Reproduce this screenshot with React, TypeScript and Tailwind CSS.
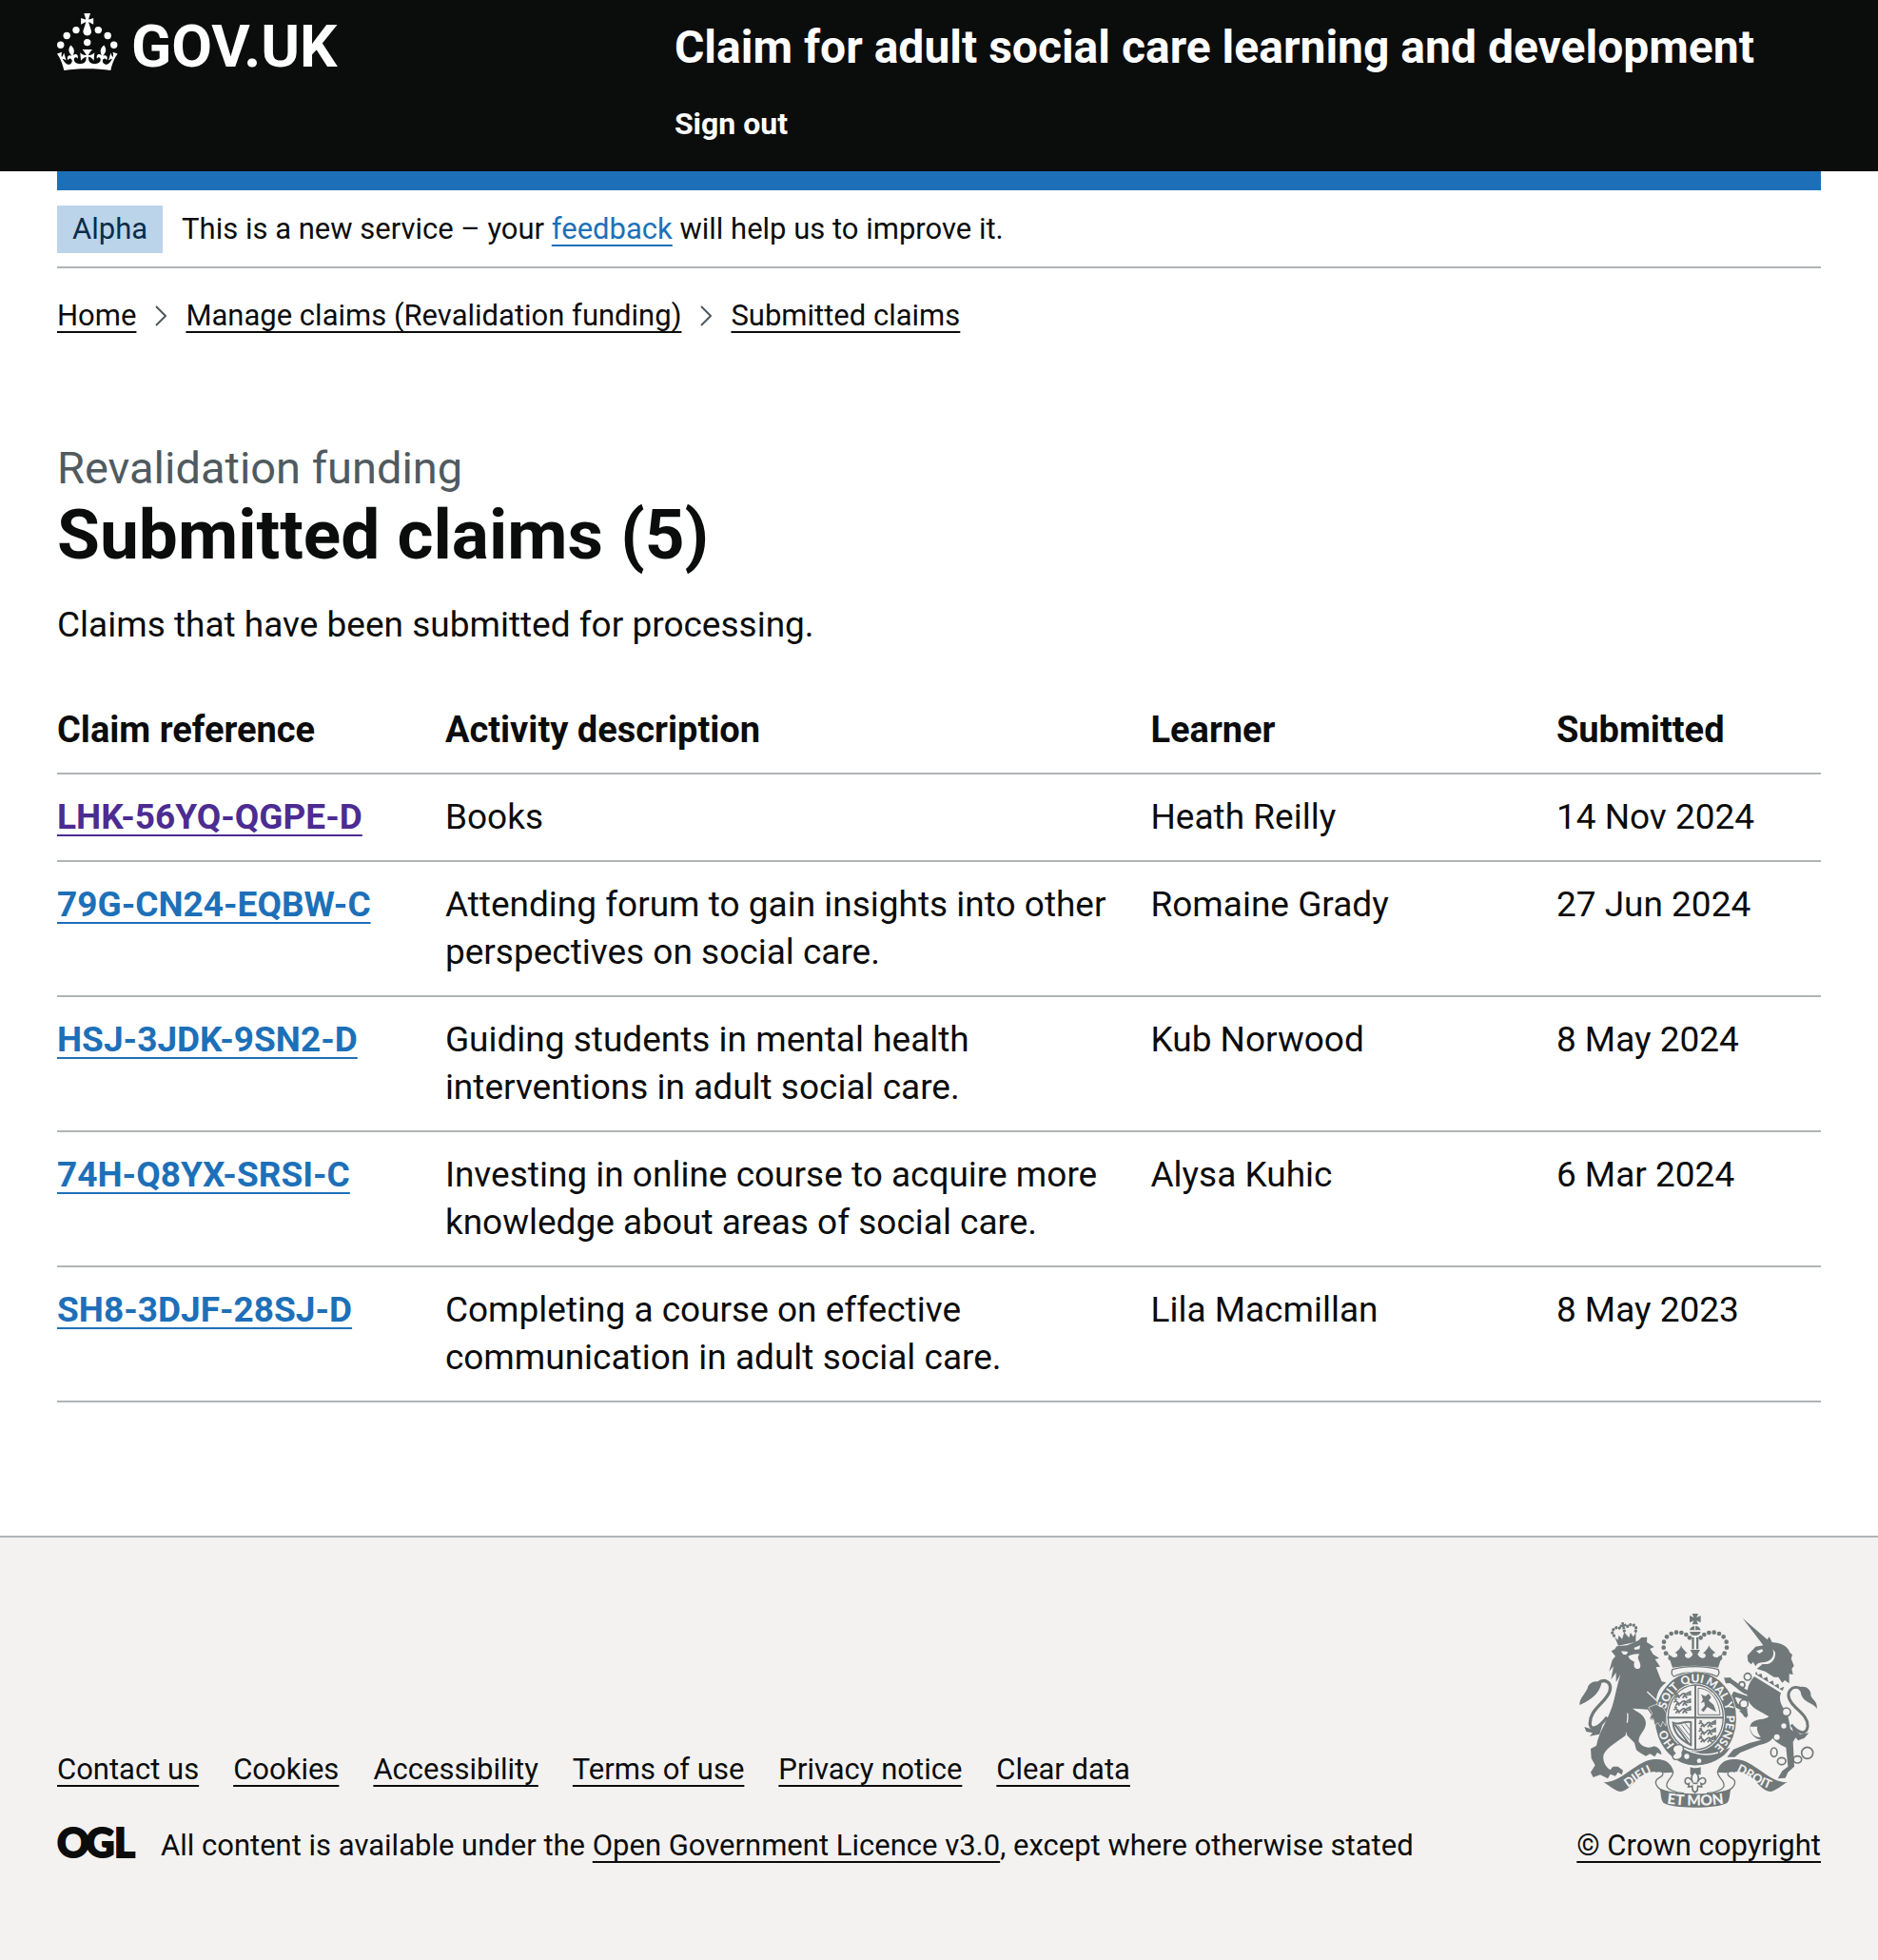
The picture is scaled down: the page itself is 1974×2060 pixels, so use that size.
import type { ReactNode } from "react";

const claims = [
  { ref: "LHK-56YQ-QGPE-D", activity: "Books", learner: "Heath Reilly", submitted: "14 Nov 2024", visited: true },
  {
    ref: "79G-CN24-EQBW-C",
    activity: "Attending forum to gain insights into other perspectives on social care.",
    learner: "Romaine Grady",
    submitted: "27 Jun 2024",
  },
  {
    ref: "HSJ-3JDK-9SN2-D",
    activity: "Guiding students in mental health interventions in adult social care.",
    learner: "Kub Norwood",
    submitted: "8 May 2024",
  },
  {
    ref: "74H-Q8YX-SRSI-C",
    activity: "Investing in online course to acquire more knowledge about areas of social care.",
    learner: "Alysa Kuhic",
    submitted: "6 Mar 2024",
  },
  {
    ref: "SH8-3DJF-28SJ-D",
    activity: "Completing a course on effective communication in adult social care.",
    learner: "Lila Macmillan",
    submitted: "8 May 2023",
  },
];

const footerLinks = ["Contact us", "Cookies", "Accessibility", "Terms of use", "Privacy notice", "Clear data"];

function Link({ children, className = "text-[#0b0c0c]" }: { children: ReactNode; className?: string }) {
  return (
    <a
      href="#"
      className={`underline decoration-2 underline-offset-[6px] [text-decoration-skip-ink:none] ${className}`}
    >
      {children}
    </a>
  );
}

function Crown() {
  return (
    <svg width="64" height="60" viewBox="0 0 64 60" fill="currentColor" aria-hidden="true">
      <circle cx="20" cy="17.6" r="3.7" />
      <circle cx="10.2" cy="23.5" r="3.7" />
      <circle cx="3.7" cy="33.2" r="3.7" />
      <circle cx="31.7" cy="30.6" r="3.7" />
      <circle cx="43.3" cy="17.6" r="3.7" />
      <circle cx="53.2" cy="23.5" r="3.7" />
      <circle cx="59.7" cy="33.2" r="3.7" />
      <path d="M33.1,9.8c.2-.1.3-.3.5-.5l4.6,2.4v-6.8l-4.6,1.5c-.1-.2-.3-.3-.5-.5l1.9-5.9h-6.7l1.9,5.9c-.2.1-.3.3-.5.5l-4.6-1.5v6.8l4.6-2.4c.1.2.3.3.5.5l-2.6,8c-.9,2.8,1.2,5.7,4.1,5.7h0c3,0,5.1-2.9,4.1-5.7l-2.6-8ZM37,37.9s-3.4,3.8-4.1,6.1c2.2,0,4.2-.5,6.4-2.8l-.7,8.5c-2-2.8-4.4-4.1-5.7-3.8.1,3.1.5,6.7,5.8,7.2,3.7.3,6.7-1.5,7-3.8.4-2.6-2-4.3-3.7-1.6-1.4-4.5,2.4-6.1,4.9-3.2-1.9-4.5-1.8-7.7,2.4-10.9,3,4,2.6,7.3-1.2,11.1,2.4-1.3,6.2,0,4,4.6-1.2-2.8-3.7-2.2-4.2.2-.3,1.7.7,3.7,3,4.2,1.9.3,4.7-.9,7-5.9-1.3,0-2.4.7-3.9,1.7l2.4-8c.6,2.3,1.4,3.7,2.2,4.5.6-1.6.5-2.8,0-5.3l5,1.8c-2.6,3.6-5.2,8.7-7.3,17.5-7.4-1.1-15.7-1.7-24.5-1.7h0c-8.8,0-17.1.6-24.5,1.7-2.1-8.9-4.7-13.9-7.3-17.5l5-1.8c-.5,2.5-.6,3.7,0,5.3.8-.8,1.6-2.3,2.2-4.5l2.4,8c-1.5-1-2.6-1.7-3.9-1.7,2.3,5,5.2,6.2,7,5.9,2.3-.4,3.3-2.4,3-4.2-.5-2.4-3-3.1-4.2-.2-2.2-4.6,1.6-6,4-4.6-3.7-3.7-4.2-7.1-1.2-11.1,4.2,3.2,4.3,6.4,2.4,10.9,2.5-2.8,6.3-1.3,4.9,3.2-1.8-2.7-4.1-1-3.7,1.6.3,2.3,3.3,4.1,7,3.8,5.4-.5,5.7-4.2,5.8-7.2-1.3-.2-3.7,1-5.7,3.8l-.7-8.5c2.2,2.3,4.2,2.7,6.4,2.8-.7-2.3-4.1-6.1-4.1-6.1h10.6,0Z" />
    </svg>
  );
}

function OglLogo() {
  return (
    <svg
      width="82"
      height="40"
      viewBox="0 0 82 40"
      aria-label="Open Government Licence"
      role="img"
      className="shrink-0 overflow-visible"
      fill="#0b0c0c"
      stroke="#0b0c0c"
      strokeWidth="2"
    >
      <text x="0 30 60" y="32" fontFamily="Lato, sans-serif" fontWeight="900" fontSize="42">
        OGL
      </text>
    </svg>
  );
}

const crownDots = [
  [341, 188],
  [327, 173],
  [320, 155],
  [321, 137],
  [330, 121],
  [344, 111],
  [360, 107],
  [376, 108],
  [391, 114],
  [402, 124],
];

const quarterLions = [
  [352, 300],
  [352, 324],
  [352, 348],
  [431, 392],
  [431, 416],
  [431, 440],
];

const garterWords = [
  ["HO", "15.5%"],
  ["SOIT", "35.5%"],
  ["QUI", "48.5%"],
  ["MAL", "60.5%"],
  ["Y", "69.5%"],
  ["PENSE", "82%"],
];

function RoyalArms() {
  const ink = "#707879";
  const paper = "#f3f2f1";
  return (
    <svg width="255" height="204" viewBox="45 48 765 612" role="img" aria-label="Royal coat of arms" fill={ink}>
      <defs>
        <path id="garter" d="M421 491 A97 113 0 0 1 421 265 A97 113 0 0 1 421 491" />
        <path id="dieu" d="M192 604 C225 590 245 560 300 543" />
        <path id="droit" d="M532 541 C580 552 610 590 670 606" />
        <path id="mon" d="M325 646 Q420 660 515 646" />
      </defs>

      {/* lion's crown */}
      <g transform="rotate(-12 198 112)">
        <path d="M164 114 L172 126 L178 112 L186 126 L197 106 L208 126 L216 112 L222 126 L233 114 L226 144 H170Z" />
        <path d="M193 75 H203 L201 82 L208 80 V90 L201 88 L203 96 H193 L195 88 L188 90 V80 L195 82Z" />
        <g>
          {[[163, 110], [160, 100], [165, 91], [175, 87], [185, 90], [211, 90], [221, 87], [231, 91], [236, 100], [233, 110], [198, 102]].map(
            ([x, y]) => (
              <circle key={`${x}-${y}`} cx={x} cy={y} r="5" />
            ),
          )}
        </g>
      </g>
      {/* lion */}
      <path d="M155 166 L166 160 L172 151 L205 148 L240 133 L250 123 L268 122 L267 138 L290 153 L277 159 L287 176 L306 188 L293 192 L309 215 L296 217 L305 240 L314 262 L328 265 C308 280 299 298 297 318 L318 336 L330 360 L328 402 L317 388 L312 405 L302 392 L291 399 L290 384 L276 380 L281 366 L270 350 L240 348 L222 347 C235 358 262 365 264 392 C264 418 238 430 242 452 C254 470 274 474 290 466 C302 468 314 480 313 493 L300 486 L292 499 L277 490 L264 497 L246 487 L234 478 L228 455 L205 432 L199 412 L205 388 L200 432 C180 448 140 470 131 492 C126 512 138 532 152 540 L160 530 L176 530 L192 542 L188 556 L176 548 L168 560 L152 554 L144 568 L120 556 L98 564 L90 548 L104 526 L92 504 L90 474 L108 464 C116 420 142 388 158 340 C168 306 174 270 184 240 L170 264 L170 234 L154 256 L162 214 L148 230 L158 194 L168 182Z" />
      <path d="M186 166 L208 168 L202 178 L192 176Z M226 156 L246 148 L244 160 L230 162Z M208 182 C218 178 234 172 244 176 C236 184 240 190 244 200 C250 214 246 222 238 222 C228 222 224 212 228 200 L214 192Z" fill={paper} />
      <path d="M268 294 L322 344 M206 362 C208 372 207 380 205 392" stroke={paper} strokeWidth="4" fill="none" />
      <path d="M55 336 C54 312 78 298 82 276 C92 260 112 258 124 268 C118 296 96 318 55 336Z" />
      <path d="M112 268 C134 250 158 264 150 292 C140 328 84 350 88 398 C92 416 112 412 142 374" fill="none" stroke={ink} strokeWidth="10" />
      <path d="M70 405 L92 412 L128 396 L118 428 L86 434 L96 424 L76 420Z" />

      {/* unicorn */}
      <path d="M569 62 L654 136 L636 150Z" />
      <path d="M584 180 L610 152 L634 148 L653 121 L662 138 C692 140 712 152 718 170 L726 178 L722 190 L731 212 L724 222 L728 240 L716 238 L716 268 L702 258 L694 266 L682 248 L668 248 L640 230 L614 222 L638 202 C624 200 614 204 610 214 L602 200 L596 208 L586 198Z" />
      <path d="M612 166 L630 160 L634 166 L622 174Z M632 202 C660 200 672 182 664 160 L672 170 C674 194 656 212 632 206Z" fill={paper} />
      <path d="M612 224 L618 238 L630 234 L634 250 L648 244 L652 262 L666 256 L670 272 L684 266 L686 282 L704 274 L696 294 L606 240Z" stroke={paper} strokeWidth="4" />
      <path d="M606 246 L690 298 C682 318 690 336 702 352 C716 372 716 394 720 412 L742 430 L728 452 L732 530 L712 548 L704 566 L680 568 L694 544 L712 530 L706 470 C690 462 672 452 664 440 C656 452 640 458 622 462 L562 486 L544 500 L520 500 L540 476 L590 456 L628 446 C600 444 582 410 598 392 C612 378 640 384 652 372 C626 356 596 346 586 320 C578 290 590 264 606 246Z" />
      <path d="M592 404 C594 424 606 438 626 438 C618 424 612 412 616 404Z" fill={paper} />
      <path d="M604 238 L692 294" stroke={paper} strokeWidth="5" />
      <path d="M588 298 C560 290 552 268 522 256 M592 318 L544 302 L538 314 L548 336 L574 350 L580 372" fill="none" stroke={ink} strokeWidth="14" />
      <path d="M510 250 L532 250 L540 266 L516 268Z M558 354 L584 346 L582 378Z" />
      <path d="M757 286 C724 268 700 298 724 330 C742 354 776 370 774 404 C770 430 748 428 722 398" fill="none" stroke={ink} strokeWidth="9" />
      <path d="M742 282 C768 270 786 288 784 306 C790 322 806 324 803 348 C794 328 756 330 752 294Z M722 400 L750 428 L778 424 L764 440 L744 448 L734 436Z" />
      <g fill="none" stroke={ink} strokeWidth="5">
        <circle cx="585" cy="247" r="11" />
        <circle cx="567" cy="272" r="9" />
        <circle cx="573" cy="332" r="13" fill={paper} />
        <circle cx="707" cy="358" r="13" fill={paper} />
        <ellipse cx="668" cy="485" rx="10" ry="14" />
        <ellipse cx="692" cy="513" rx="13" ry="11" />
        <ellipse cx="742" cy="508" rx="13" ry="11" />
        <circle cx="773" cy="487" r="18" />
      </g>
      <circle cx="699" cy="402" r="8" fill={paper} />
      <circle cx="677" cy="437" r="9" fill={paper} />

      {/* imperial crown */}
      <path d="M410 48 H429 L424 60 L437 54 V76 L424 70 L429 82 H410 L415 70 L402 76 V54 L415 60Z" />
      <path d="M402 100 A18 17 0 0 1 437 100Z M402 105 H437 A18 16 0 0 1 402 105Z" />
      <path d="M409 122 H416 V160 H409Z M423 122 H430 V160 H423Z" />
      <path d="M419 82 V100" stroke={paper} strokeWidth="3" />
      {crownDots.map(([x, y]) => (
        <g key={`${x}-${y}`}>
          <circle cx={x} cy={y} r="7" />
          <circle cx={839 - x} cy={y} r="7" />
        </g>
      ))}
      <path d="M332 170 C342 184 350 190 362 184 C366 178 362 172 356 172 C366 164 374 158 375 148 C378 158 388 166 396 174 C388 172 384 178 390 186 C400 192 408 184 412 176 L404 162 H435 L427 176 C432 184 440 192 450 186 C456 178 450 172 443 174 C452 166 460 158 463 148 C466 158 474 164 484 172 C476 172 472 178 478 184 C490 190 498 184 508 170 L492 218 C440 210 398 210 348 218Z" />
      <path d="M348 224 C390 212 450 212 492 224 C496 232 496 240 488 246 C450 228 392 228 352 246 C344 240 344 232 348 224Z" fill={paper} stroke={ink} strokeWidth="4" />

      {/* garter */}
      <ellipse cx="421" cy="379" rx="130" ry="149" fill={paper} />
      <ellipse cx="421" cy="379" rx="128" ry="147" />
      <ellipse cx="421" cy="375" rx="92" ry="107" fill={paper} />
      <ellipse cx="421" cy="375" rx="87" ry="102" fill={paper} stroke={ink} strokeWidth="4" />
      <path d="M332 376 H510 M420 272 V478" stroke={ink} strokeWidth="6" />
      {quarterLions.map(([x, y]) => (
        <path
          key={`${x}-${y}`}
          d={`M${x} ${y + 4} q6 -8 12 0 t12 0 t14 -2 t12 -2 M${x + 6} ${y + 14} l6 -8 l6 8 M${x + 28} ${y + 14} l6 -9 l8 9 M${x + 40} ${y} l12 -6 v12 M${x + 2} ${y - 6} l8 2`}
          fill="none"
          stroke={ink}
          strokeWidth="5"
        />
      ))}
      <path d="M429 283 C466 284 494 316 498 367 H429Z" fill="none" stroke={ink} strokeWidth="3" />
      <path d="M438 302 L452 308 L462 300 L470 312 L462 322 L478 336 L486 358 L472 350 L458 342 L446 358 L438 352 L450 338 L448 326 L438 330 L444 318Z" />
      <path d="M350 392 C368 402 384 384 406 390 V462 C372 446 352 422 350 392Z M356 398 L398 456" fill="none" stroke={ink} strokeWidth="6" />
      <path d="M366 402 L400 446 M376 398 L402 432 M388 394 L403 414" stroke={ink} strokeWidth="3" />
      <path d="M352 476 C400 504 460 508 512 478 L530 470 C500 524 400 548 352 500Z" />
      <path d="M378 470 C420 494 460 496 492 486" fill="none" stroke={paper} strokeWidth="4" />
      <path d="M360 462 C384 456 386 474 378 486 C382 498 374 510 356 508 C344 502 348 494 356 488 C346 480 346 466 360 462Z" fill={paper} stroke={ink} strokeWidth="4" />
      <circle cx="393" cy="498" r="8" fill={paper} />
      <circle cx="432" cy="512" r="7" fill={paper} />

      {/* lion's near paw over the garter */}
      <path d="M296 334 L318 344 L329 362 L327 402 L317 388 L311 405 L302 392 L292 400 L288 380 L276 378 L284 362 L272 344Z" stroke={paper} strokeWidth="2" />

      <g fill={paper} fontFamily="Lato, sans-serif" fontWeight="900" fontSize="36">
        {garterWords.map(([word, offset]) => (
          <text key={word} textAnchor="middle">
            <textPath href="#garter" startOffset={offset}>
              {word}
            </textPath>
          </text>
        ))}
      </g>

      {/* pendant and motto ribbon */}
      <path d="M404 532 C414 536 426 536 437 532 V556 H404Z" />
      <path d="M419 546 C432 558 432 570 426 580 C432 566 448 560 452 572 C454 584 444 588 438 584 L440 594 L428 592 L426 606 L419 612 L412 606 L410 592 L398 594 L400 584 C394 588 386 584 388 572 C392 560 408 566 412 580 C406 570 406 558 419 546Z" fill={paper} stroke={ink} strokeWidth="5" />
      <path d="M412 583 H427" stroke={ink} strokeWidth="5" />
      {["translate(0 0)", "translate(840 0) scale(-1 1)"].map((t) => (
        <g key={t} transform={t}>
          <path d="M130 580 C186 582 236 510 290 507 C326 504 346 520 352 548 L324 550 C300 542 268 546 246 562 C224 580 206 610 182 609 C160 604 148 588 130 580Z" />
          <path d="M294 546 C322 540 326 556 302 568 C288 578 298 596 312 604 M350 546 C350 566 326 574 330 592 C332 600 352 612 384 614" fill="none" stroke={ink} strokeWidth="4" />
        </g>
      ))}
      <path d="M306 598 C350 622 490 622 534 598 C526 612 532 632 520 645 C490 664 350 664 320 645 C308 632 314 612 306 598Z" />
      <g fill={paper} fontFamily="Lato, sans-serif" fontWeight="900" textAnchor="middle">
        <text fontSize="38">
          <textPath href="#dieu" startOffset="50%">DIEU</textPath>
        </text>
        <text fontSize="38">
          <textPath href="#droit" startOffset="50%">DROIT</textPath>
        </text>
        <text fontSize="46">
          <textPath href="#mon" startOffset="50%">ET MON</textPath>
        </text>
      </g>
    </svg>
  );
}

export default function App() {
  return (
    <div className="bg-white font-['Roboto',sans-serif] text-[37px] leading-[50px] text-[#0b0c0c]">
      <header className="bg-[#0b0c0c] px-[60px] pb-[30px] text-white">
        <div className="flex items-start">
          <a href="#" className="flex w-[35%] shrink-0 items-start gap-[14px] pt-[14px] text-[62px] leading-[70px] font-bold">
            <Crown />
            <span>GOV.UK</span>
          </a>
          <div className="flex flex-col items-start gap-[30px] pt-5 font-bold">
            <a href="#" className="text-5xl leading-[60px]">
              Claim for adult social care learning and development
            </a>
            <a href="#" className="text-[32px] leading-10">
              Sign out
            </a>
          </div>
        </div>
      </header>

      <div className="px-[60px]">
        <div className="h-5 bg-[#1d70b8]" />
        <div className="flex items-center gap-5 border-b-2 border-[#b1b4b6] pt-4 pb-[14px] text-[31px]">
          <strong className="bg-[#bbd4ea] px-4 font-normal text-[#0c2d4a]">Alpha</strong>
          <p>
            This is a new service – your <Link className="text-[#1d70b8]">feedback</Link> will help us to improve it.
          </p>
        </div>

        <nav aria-label="Breadcrumb" className="pt-[30px] text-[31px] leading-10">
          <ol className="flex items-center gap-5">
            {["Home", "Manage claims (Revalidation funding)", "Submitted claims"].map((crumb, i) => (
              <li key={crumb} className="flex items-center gap-5">
                {i > 0 && (
                  <svg width="12" height="22" viewBox="0 0 12 22" fill="none" stroke="#505a5f" strokeWidth="2" aria-hidden="true">
                    <path d="M1 1 L11 11 L1 21" />
                  </svg>
                )}
                <Link>{crumb}</Link>
              </li>
            ))}
          </ol>
        </nav>

        <main className="mt-[110px]">
          <span className="block text-[47px] leading-[60px] text-[#505a5f]">Revalidation funding</span>
          <h1 className="text-[73px] leading-[80px] font-bold">Submitted claims (5)</h1>
          <p className="mt-[30px]">Claims that have been submitted for processing.</p>

          <table className="mt-10 w-full table-fixed text-left">
            <thead>
              <tr className="border-b-2 border-[#b1b4b6] text-[38px]">
                <th scope="col" className="w-[22%] py-5 pr-10">Claim reference</th>
                <th scope="col" className="w-[40%] py-5 pr-10">Activity description</th>
                <th scope="col" className="w-[23%] py-5 pr-10">Learner</th>
                <th scope="col" className="w-[15%] py-5">Submitted</th>
              </tr>
            </thead>
            <tbody>
              {claims.map((claim) => (
                <tr key={claim.ref} className="border-b-2 border-[#b1b4b6] align-top">
                  <td className="py-5 font-bold whitespace-nowrap">
                    <Link className={claim.visited ? "text-[#4c2c92]" : "text-[#1d70b8]"}>{claim.ref}</Link>
                  </td>
                  <td className="py-5 pr-10">{claim.activity}</td>
                  <td className="py-5 pr-10">{claim.learner}</td>
                  <td className="py-5 whitespace-nowrap">{claim.submitted}</td>
                </tr>
              ))}
            </tbody>
          </table>
        </main>
      </div>

      <footer className="mt-[140px] flex items-end justify-between border-t-2 border-[#b1b4b6] bg-[#f3f2f1] px-[60px] pt-20 pb-[100px] text-[31px] leading-10">
        <div>
          <ul className="flex gap-9">
            {footerLinks.map((label) => (
              <li key={label}>
                <Link>{label}</Link>
              </li>
            ))}
          </ul>
          <div className="mt-10 flex gap-[27px]">
            <OglLogo />
            <p>
              All content is available under the <Link>Open Government Licence v3.0</Link>, except where otherwise stated
            </p>
          </div>
        </div>
        <div className="flex flex-col items-start gap-5">
          <RoyalArms />
          <Link>© Crown copyright</Link>
        </div>
      </footer>
    </div>
  );
}
